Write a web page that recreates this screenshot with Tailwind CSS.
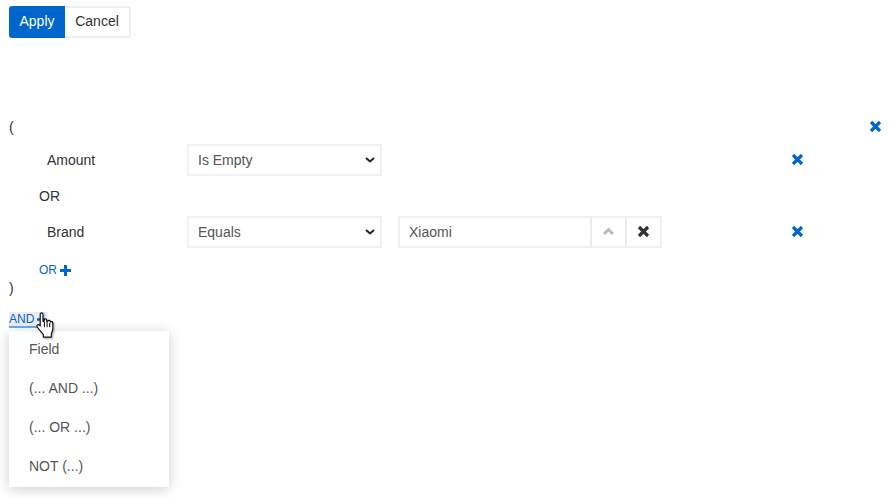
<!DOCTYPE html>
<html lang="en">
<head>
  <meta charset="UTF-8" />
  <meta name="viewport" content="width=device-width, initial-scale=1.0" />
  <title>Filter builder</title>
  <script src="https://cdn.jsdelivr.net/npm/@tailwindcss/browser@4"></script>
</head>
<body class="relative h-[498px] w-[891px] overflow-hidden bg-white font-['Liberation_Sans',Arial,sans-serif] text-sm text-[#333]">
  <div class="flex pl-[9px] pt-[6px]">
    <button class="h-8 w-14 rounded-l-[3px] bg-[#0066cc] pb-[2px] text-white">Apply</button>
    <button class="h-8 w-[66px] rounded-r-[3px] border-2 border-l-0 border-[#eeeeee] bg-white pb-[2px]">Cancel</button>
  </div>

  <div class="relative mt-[80px] pl-[9px]">
    <div class="flex h-[18px] items-center">(</div>
    <button class="absolute right-[9px] top-[2px] text-[#0066cc]">
      <svg class="h-[13px] w-[13px]" viewBox="0 0 13 13"><path d="M2 2l9 9M11 2l-9 9" stroke="currentColor" stroke-width="3.2" fill="none"/></svg>
    </button>

    <div class="mt-2 flex h-8 items-center">
      <span class="ml-[38px] w-[140px]">Amount</span>
      <div class="relative h-8 w-[195px]">
        <select class="h-8 w-full appearance-none border-2 border-[#f1f1f1] bg-white pl-[9px] text-[#555]"><option>Is Empty</option></select>
        <svg class="absolute right-[7px] top-[13px] h-[6px] w-[10px]" viewBox="0 0 10 6"><path d="M1 1l4 3.5L9 1" stroke="#222" stroke-width="2" fill="none"/></svg>
      </div>
      <button class="mb-[1px] ml-[409px] text-[#0066cc]">
        <svg class="h-[13px] w-[13px]" viewBox="0 0 13 13"><path d="M2 2l9 9M11 2l-9 9" stroke="currentColor" stroke-width="3.2" fill="none"/></svg>
      </button>
    </div>

    <div class="mt-[11px] flex h-[18px] items-center pl-[30px]">OR</div>

    <div class="mt-[11px] flex h-8 items-center">
      <span class="ml-[38px] w-[140px]">Brand</span>
      <div class="relative h-8 w-[195px]">
        <select class="h-8 w-full appearance-none border-2 border-[#f1f1f1] bg-white pl-[9px] text-[#555]"><option>Equals</option></select>
        <svg class="absolute right-[7px] top-[13px] h-[6px] w-[10px]" viewBox="0 0 10 6"><path d="M1 1l4 3.5L9 1" stroke="#222" stroke-width="2" fill="none"/></svg>
      </div>
      <div class="ml-4 flex h-8 w-[264px] border-2 border-[#f1f1f1]">
        <span class="flex w-[190px] items-center pl-[9px] text-[#555]">Xiaomi</span>
        <span class="flex w-[35px] items-center justify-center border-l-2 border-[#ececec] pb-[2px] text-[#bbbbbb]">
          <svg class="h-[9px] w-[13px]" viewBox="0 0 13 9"><path d="M2 7l4.5-4.5L11 7" stroke="currentColor" stroke-width="3" fill="none"/></svg>
        </span>
        <span class="flex flex-1 items-center justify-center border-l-2 border-[#ececec] pb-[2px] text-[#333]">
          <svg class="h-[13px] w-[13px]" viewBox="0 0 13 13"><path d="M2 2l9 9M11 2l-9 9" stroke="currentColor" stroke-width="3.2" fill="none"/></svg>
        </span>
      </div>
      <button class="mb-[1px] ml-[129px] text-[#0066cc]">
        <svg class="h-[13px] w-[13px]" viewBox="0 0 13 13"><path d="M2 2l9 9M11 2l-9 9" stroke="currentColor" stroke-width="3.2" fill="none"/></svg>
      </button>
    </div>

    <div class="mt-[14px] flex h-4 items-center gap-[3px] pl-[30px] text-xs text-[#0066cc]">
      OR
      <svg class="h-[11px] w-[11px]" viewBox="0 0 11 11"><path d="M5.5 0v11M0 5.5h11" stroke="currentColor" stroke-width="3" fill="none"/></svg>
    </div>

    <div class="mt-[1px] flex h-[18px] items-center">)</div>

    <div class="relative mt-[15px] flex h-[16px] w-[39px] items-center gap-[3px] border-b-2 border-[#6ea8e6] bg-[#ececec] text-xs text-[#0066cc]">
      AND
      <svg class="h-[9px] w-[9px]" viewBox="0 0 9 9"><path d="M4.5 0v9M0 4.5h9" stroke="currentColor" stroke-width="2.4" fill="none"/></svg>
    </div>
  </div>

  <ul class="absolute left-[9px] top-[331px] w-40 bg-white text-[#555] shadow-[0_2px_12px_rgba(0,0,0,0.2)]">
    <li class="flex h-[39px] items-center pb-1 pl-5">Field</li>
    <li class="flex h-[39px] items-center pb-1 pl-5">(... AND ...)</li>
    <li class="flex h-[39px] items-center pb-1 pl-5">(... OR ...)</li>
    <li class="flex h-[39px] items-center pb-1 pl-5">NOT (...)</li>
  </ul>

  <svg class="absolute left-[36px] top-[311px] drop-shadow-[1px_1px_1px_rgba(0,0,0,0.35)]" width="19" height="27" viewBox="0 0 19 27">
    <g transform="translate(-0.5 0.5) scale(1.05)">
      <path d="M4.5 2.5c0-1.6 2.6-1.6 2.6 0v7l1.2-.3v-1c0-1.4 2.3-1.4 2.4 0v1.2l1-.1c.3-1.2 2.3-1 2.4.3l.1.6c.5-1 2.3-.8 2.3.6v5.2c0 2.6-.8 3.7-1.4 5.2v3.2H7.5v-2.4c-1.4-1.6-4-4.6-5.8-7.2-1-1.6.9-3 2.2-1.7l.6.7z" fill="#fff" stroke="#111" stroke-width="1.1" stroke-linejoin="round"/>
      <path d="M8.5 10v5M11 10v5M13.5 11v4" stroke="#111" stroke-width="1" fill="none"/>
    </g>
  </svg>
</body>
</html>
